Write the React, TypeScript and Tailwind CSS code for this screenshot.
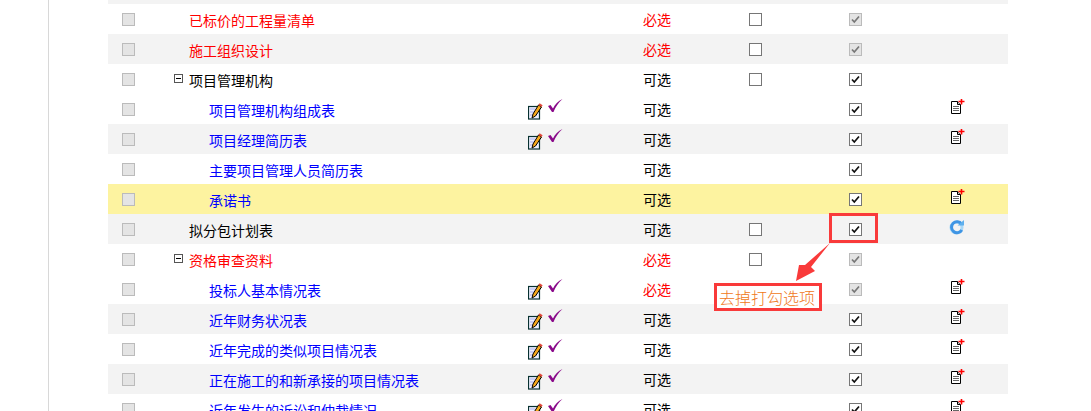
type Box = "none" | "empty" | "blank" | "checked" | "locked";

type Row = {
  name: string;
  level: 1 | 2;
  color: string;
  tree?: boolean;
  sign?: boolean;
  status: "必选" | "可选";
  edit: Box;
  pick: Box;
  action?: "doc" | "refresh";
  bg?: string;
};

const RED = "text-[#ff0000]";
const BLUE = "text-[#0000ff]";
const BLACK = "text-black";
const GRAY = "bg-[#f3f3f3]";

const rows: Row[] = [
  { name: "已标价的工程量清单", level: 1, color: RED, status: "必选", edit: "empty", pick: "locked" },
  { name: "施工组织设计", level: 1, color: RED, status: "必选", edit: "empty", pick: "locked", bg: GRAY },
  { name: "项目管理机构", level: 1, color: BLACK, tree: true, status: "可选", edit: "empty", pick: "checked" },
  { name: "项目管理机构组成表", level: 2, color: BLUE, sign: true, status: "可选", edit: "none", pick: "checked", action: "doc" },
  { name: "项目经理简历表", level: 2, color: BLUE, sign: true, status: "可选", edit: "none", pick: "checked", action: "doc", bg: GRAY },
  { name: "主要项目管理人员简历表", level: 2, color: BLUE, status: "可选", edit: "none", pick: "checked" },
  { name: "承诺书", level: 2, color: BLUE, status: "可选", edit: "none", pick: "checked", action: "doc", bg: "bg-[#fdf3a0]" },
  { name: "拟分包计划表", level: 1, color: BLACK, status: "可选", edit: "empty", pick: "checked", action: "refresh", bg: GRAY },
  { name: "资格审查资料", level: 1, color: RED, tree: true, status: "必选", edit: "empty", pick: "locked" },
  { name: "投标人基本情况表", level: 2, color: BLUE, sign: true, status: "必选", edit: "none", pick: "locked", action: "doc" },
  { name: "近年财务状况表", level: 2, color: BLUE, sign: true, status: "可选", edit: "none", pick: "checked", action: "doc", bg: GRAY },
  { name: "近年完成的类似项目情况表", level: 2, color: BLUE, sign: true, status: "可选", edit: "none", pick: "checked", action: "doc" },
  { name: "正在施工的和新承接的项目情况表", level: 2, color: BLUE, sign: true, status: "可选", edit: "none", pick: "checked", action: "doc", bg: GRAY },
  { name: "近年发生的诉讼和仲裁情况", level: 2, color: BLUE, sign: true, status: "可选", edit: "none", pick: "checked", action: "doc" },
];

const CheckBox = ({ kind }: { kind: Box }) => {
  if (kind === "none") return null;
  const locked = kind === "locked" || kind === "blank";
  return (
    <span
      className={`flex h-[13px] w-[13px] items-center justify-center border ${
        locked ? "border-[#bbbbbb] bg-[#e4e4e4]" : "border-[#767676] bg-white"
      }`}
    >
      {(kind === "checked" || kind === "locked") && (
        <svg width="11" height="11" viewBox="0 0 11 11" fill="none">
          <path d="M2 5.5 L4.3 8 L9 2.5" stroke={locked ? "#777777" : "#111111"} strokeWidth="1.7" />
        </svg>
      )}
    </span>
  );
};

const SignIcons = () => (
  <div className="flex items-start">
    <svg width="15" height="19" viewBox="0 0 15 19" className="mt-[3px]">
      <rect x="0.5" y="5.5" width="11" height="12.5" fill="#eef0ff" stroke="#06302f" strokeWidth="1.2" />
      <path d="M2 8h5M2 11h4M2 14h4" stroke="#aab0ee" />
      <path d="M4 17 L5 13 L10.5 4 L13.5 6 L7.5 15 Z" fill="#f5a81c" stroke="#000000" strokeWidth="1" />
      <path d="M10.5 4 L11.6 2.2 L14.6 4.2 L13.5 6 Z" fill="#e2483a" />
    </svg>
    <svg width="16" height="15" viewBox="0 0 16 15" className="ml-[4px]">
      <path d="M1 8 L3.5 7 L6 10.5 C8 6.5 11 3 15.5 1 C11.5 4.5 8.5 9 6.5 14 L5 14 Z" fill="#8a0a8a" />
    </svg>
  </div>
);

const DocIcon = () => (
  <svg width="14" height="16" viewBox="0 0 14 16" className="-mt-[5px] ml-[3px]">
    <path d="M0.5 2.5 H6.5 L9.5 5.5 V14.5 H0.5 Z" fill="white" stroke="#000000" />
    <path d="M6.5 2.5 V5.5 H9.5" fill="#cccccc" stroke="#000000" />
    <path d="M2 7.5h6M2 9.5h6M2 11.5h6" stroke="#666666" />
    <path d="M7.5 2.5h6M10.5 0v5.5" stroke="#ff0000" strokeWidth="1.6" />
  </svg>
);

const RefreshIcon = () => (
  <svg width="16" height="16" viewBox="0 0 16 16" className="-mt-[4px]">
    <circle cx="7.5" cy="8.5" r="5.5" fill="none" stroke="#a9d8f7" strokeWidth="3" />
    <path d="M12.5 5 A5.5 5.5 0 1 0 12.8 11" fill="none" stroke="#3f95e4" strokeWidth="3" />
    <path d="M8.5 6.5 L15 6.5 L15 1 Z" fill="#5fb0ee" />
  </svg>
);

const TreeMinus = () => (
  <span className="absolute left-[-15px] top-[4px] flex h-[9px] w-[9px] items-center justify-center border border-[#555555]">
    <span className="h-px w-[5px] bg-black" />
  </span>
);

const TableRow = ({ row }: { row: Row }) => (
  <div className={`grid h-[30px] shrink-0 grid-cols-[40px_380px_115px_62px_100px_100px_103px] items-center ${row.bg ?? ""}`}>
    <div className="flex justify-center">
      <CheckBox kind="blank" />
    </div>
    <div className={`pt-[2px] ${row.level === 1 ? "pl-[41px]" : "pl-[61px]"}`}>
      <span className={`relative inline-block whitespace-nowrap leading-[20px] ${row.color}`}>
        {row.tree && <TreeMinus />}
        {row.name}
      </span>
    </div>
    <div>{row.sign && <SignIcons />}</div>
    <div className={`leading-[20px] ${row.status === "必选" ? RED : BLACK}`}>{row.status}</div>
    <div className="flex justify-center">
      <CheckBox kind={row.edit} />
    </div>
    <div className="flex justify-center">
      <CheckBox kind={row.pick} />
    </div>
    <div className="flex justify-center">
      {row.action === "doc" && <DocIcon />}
      {row.action === "refresh" && <RefreshIcon />}
    </div>
  </div>
);

export default function App() {
  return (
    <div className="relative flex h-[411px] w-[1091px] overflow-hidden bg-white font-['Noto_Sans_CJK_SC','Microsoft_YaHei',sans-serif] text-[14px]">
      <div className="ml-[48px] w-[60px] border-l border-[#d8d8d8]" />
      <div className="flex w-[900px] flex-col">
        <div className="h-[4px] shrink-0 bg-[#f3f3f3]" />
        {rows.map((row) => (
          <TableRow key={row.name} row={row} />
        ))}
      </div>

      {/* marcação vermelha por cima da tabela */}
      <div className="absolute left-[829px] top-[213px] h-[30px] w-[49px] border-[3px] border-[#f93a3a]" />
      <svg width="60" height="60" viewBox="0 0 60 60" className="absolute left-[780px] top-[235px]">
        <path d="M50 8 L31 32 L35 36 L16 46 L19 30 L25 30 Z" fill="#f93a3a" />
      </svg>
      <div className="absolute left-[714px] top-[283px] flex h-[28px] w-[108px] items-center justify-center border-[3px] border-[#f93a3a] bg-white pr-[2px] text-[16px] font-light text-[#f07820]">
        去掉打勾选项
      </div>
    </div>
  );
}
